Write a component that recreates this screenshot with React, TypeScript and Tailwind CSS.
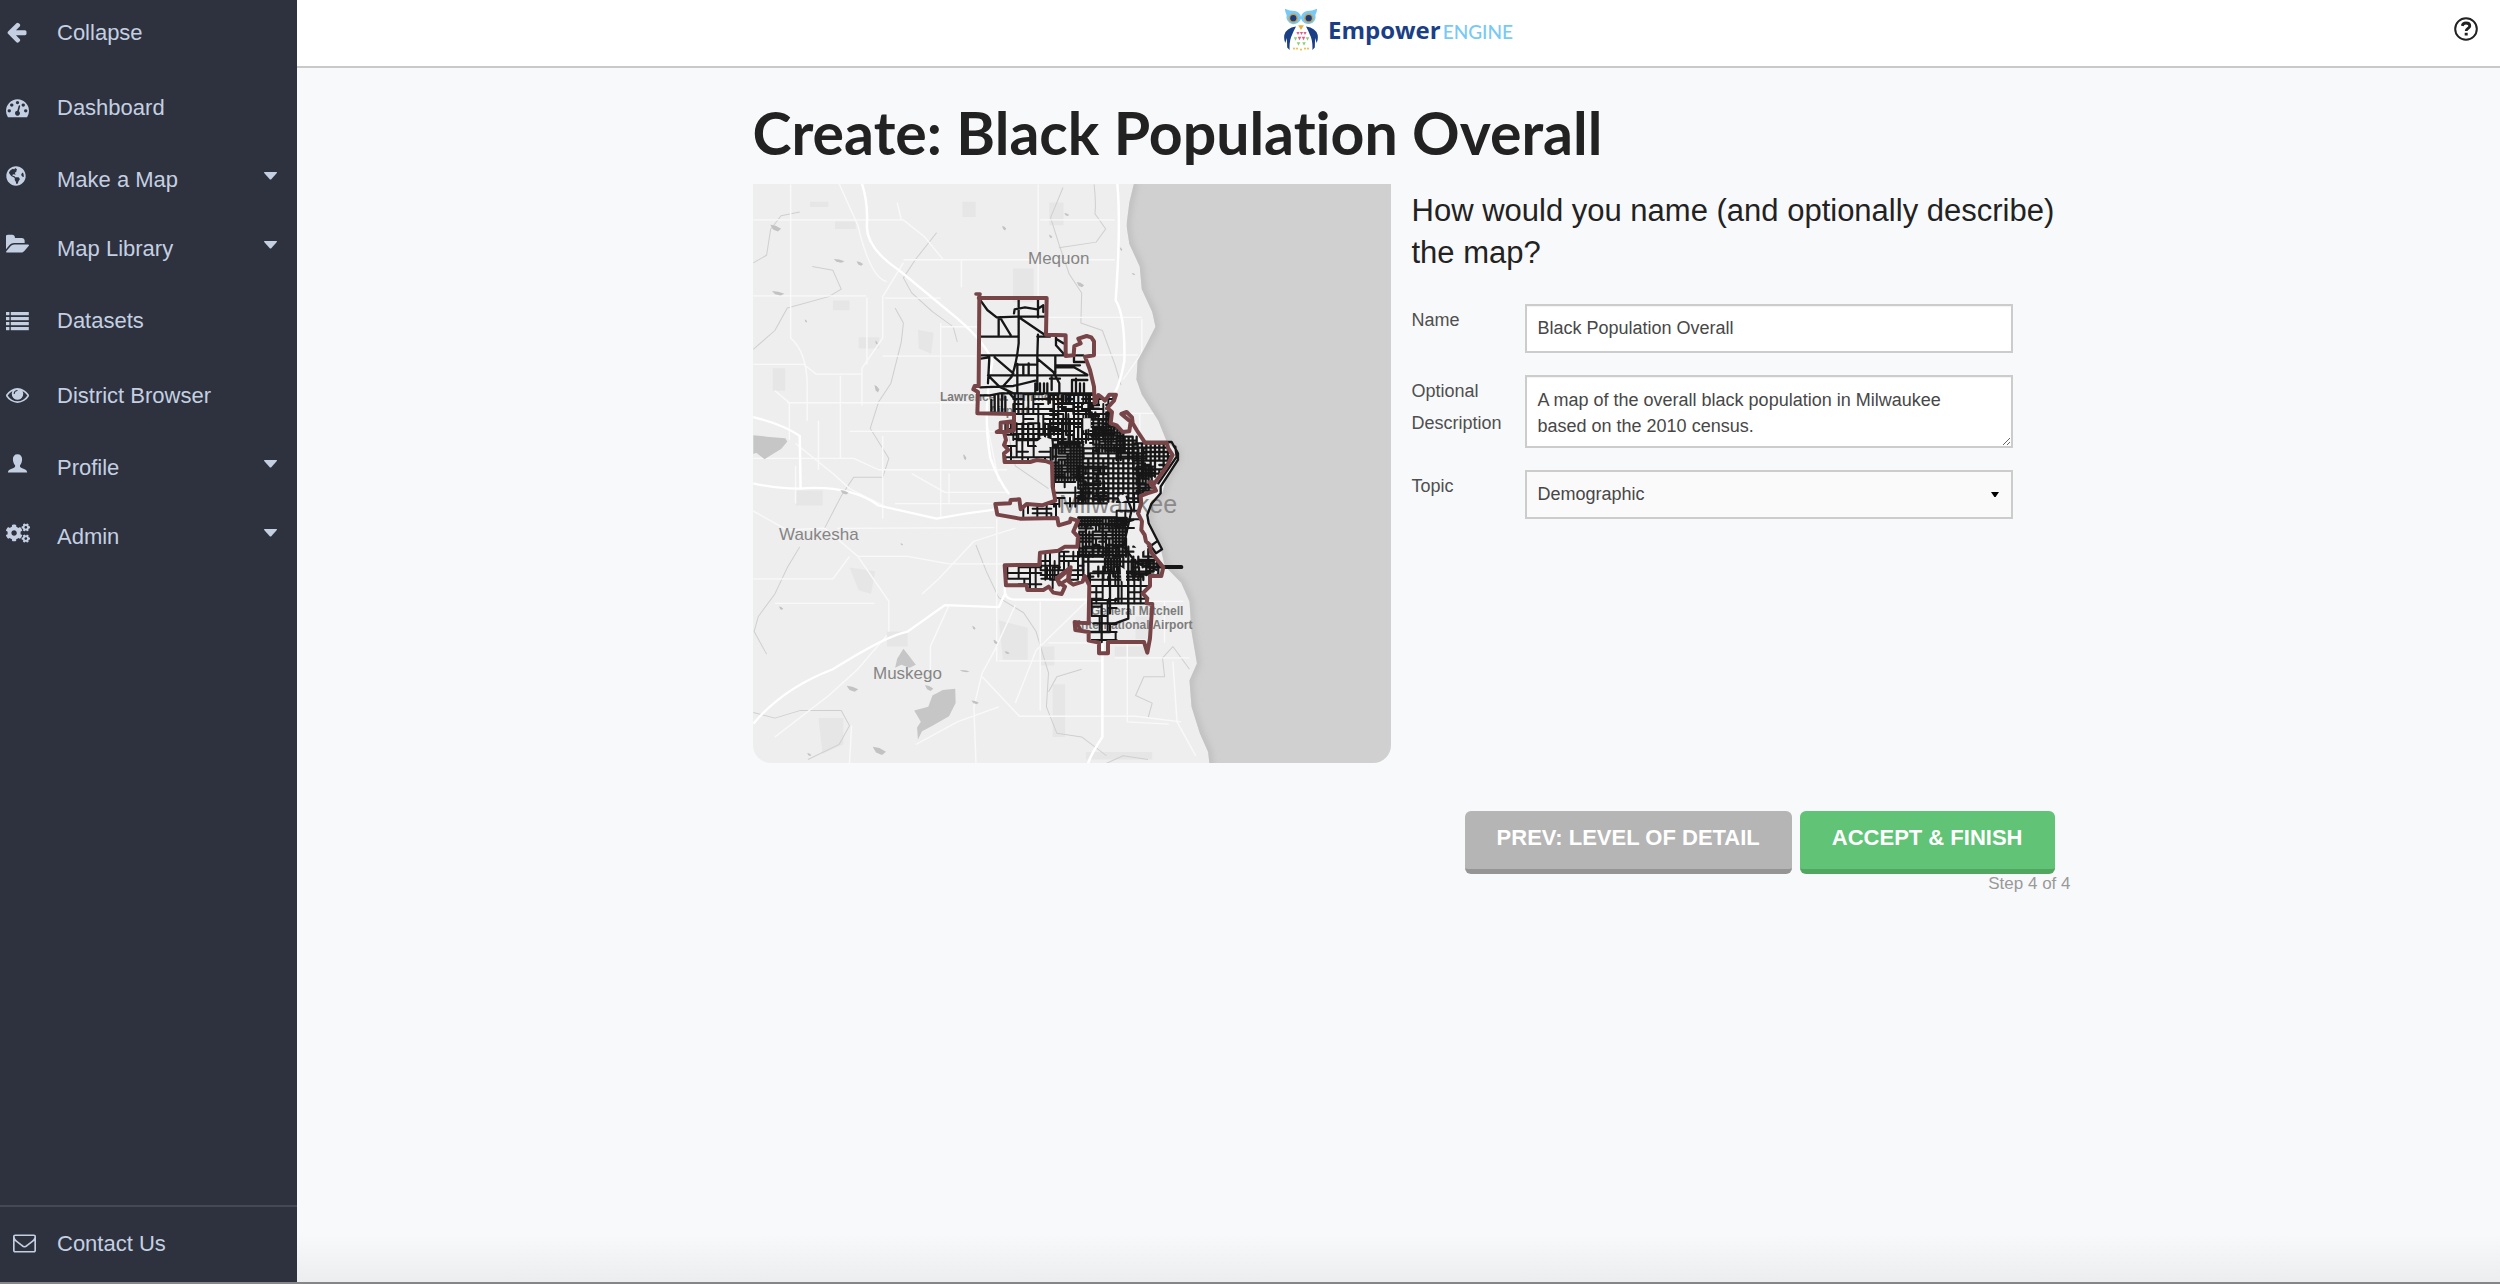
import React from "react";
import { FaCogs, FaGlobeAmericas } from "react-icons/fa";

const ICON = "h-[23px] w-[23px] fill-current";

function ArrowLeftIcon() {
  return (
    <svg viewBox="-60 128 1792 1792" className={ICON} aria-hidden="true">
      <path d="M1536 896v128q0 53-32.5 90.5t-84.5 37.5h-704l293 294q38 36 38 90t-38 90l-75 76q-37 37-90 37-52 0-91-37l-651-652q-37-37-37-90 0-52 37-91l651-650q38-38 91-38 52 0 90 38l75 74q38 38 38 91t-38 91l-293 293h704q52 0 84.5 37.5t32.5 90.5z" />
    </svg>
  );
}

function GaugeIcon() {
  return (
    <svg viewBox="0 0 1792 1792" className={ICON} aria-hidden="true">
      <path d="M384 1152q0-53-37.5-90.5t-90.5-37.5-90.5 37.5-37.5 90.5 37.5 90.5 90.5 37.5 90.5-37.5 37.5-90.5zm192-448q0-53-37.5-90.5t-90.5-37.5-90.5 37.5-37.5 90.5 37.5 90.5 90.5 37.5 90.5-37.5 37.5-90.5zm428 481l101-382q6-26-7.5-48.5t-38.5-29.5-48 6.5-30 39.5l-101 382q-60 5-107 43.5t-63 98.5q-20 77 20 146t117 89 146-20 89-117q16-60-6-117t-72-91zm660-33q0-53-37.5-90.5t-90.5-37.5-90.5 37.5-37.5 90.5 37.5 90.5 90.5 37.5 90.5-37.5 37.5-90.5zm-640-640q0-53-37.5-90.5t-90.5-37.5-90.5 37.5-37.5 90.5 37.5 90.5 90.5 37.5 90.5-37.5 37.5-90.5zm448 192q0-53-37.5-90.5t-90.5-37.5-90.5 37.5-37.5 90.5 37.5 90.5 90.5 37.5 90.5-37.5 37.5-90.5zm320 448q0 261-141 483-19 29-54 29h-1402q-35 0-54-29-141-221-141-483 0-182 71-348t191-286 286-191 348-71 348 71 286 191 191 286 71 348z" />
    </svg>
  );
}

function GlobeIcon() {
  return <FaGlobeAmericas className="h-5 w-5" aria-hidden="true" />;
}

function FolderIcon() {
  return (
    <svg viewBox="0 0 1815 1792" className={ICON} aria-hidden="true">
      <path d="M1815 952q0 31-31 66l-336 396q-43 51-120.5 86.5t-143.5 35.5h-1088q-34 0-60.5-13t-26.5-43q0-31 31-66l336-396q43-51 120.5-86.5t143.5-35.5h1088q34 0 60.5 13t26.5 43zm-343-344v160h-832q-94 0-197 47.5t-164 119.5l-337 396-5 6q0-4-.5-12.5t-.5-12.5v-960q0-92 66-158t158-66h320q92 0 158 66t66 158v32h544q92 0 158 66t66 158z" />
    </svg>
  );
}

function ListIcon() {
  return (
    <svg viewBox="0 0 23 23" className={ICON} aria-hidden="true">
      {[3, 8, 13, 18].map((y) => (
        <React.Fragment key={y}>
          <rect x="0" y={y} width="3.4" height="3.2" />
          <rect x="4.8" y={y} width="18" height="3.2" />
        </React.Fragment>
      ))}
    </svg>
  );
}

function EyeIcon() {
  return (
    <svg viewBox="0 64 1792 1792" className={ICON} aria-hidden="true">
      <path d="M1664 960q-152-236-381-353 61 104 61 225 0 185-131.5 316.5t-316.5 131.5-316.5-131.5-131.5-316.5q0-121 61-225-229 117-381 353 133 205 333.5 326.5t434.5 121.5 434.5-121.5 333.5-326.5zm-720-384q0-20-14-34t-34-14q-125 0-214.5 89.5t-89.5 214.5q0 20 14 34t34 14 34-14 14-34q0-86 61-147t147-61q20 0 34-14t14-34zm848 384q0 34-20 69-140 230-376.5 368.5t-499.5 138.5-499.5-139-376.5-368q-20-35-20-69t20-69q140-229 376.5-368t499.5-139 499.5 139 376.5 368q20 35 20 69z" />
      <circle cx="896" cy="850" r="420" />
      <path d="M640 800q10-190 220-230" fill="none" stroke="#2d323e" strokeWidth="90" strokeLinecap="round" />
    </svg>
  );
}

function UserIcon() {
  return (
    <svg viewBox="0 0 23 23" className={ICON} aria-hidden="true">
      <path d="M11.5 2.2c3 0 4.6 2 4.6 5 0 2.600-.9 4.800-2.100 6v1.300c.4 1.100 1.500 1.500 3.500 2.200 2.600.9 3.500 1.600 3.700 3.800H1.900c.2-2.200 1.100-2.900 3.700-3.800 2-.7 3.100-1.100 3.500-2.200v-1.300c-1.200-1.200-2.200-3.400-2.200-6 0-3 1.600-5 4.600-5z" />
    </svg>
  );
}

function CogsIcon() {
  return <FaCogs className="h-6 w-6" aria-hidden="true" />;
}

function EnvelopeIcon() {
  return (
    <svg viewBox="0 64 1792 1792" className={ICON} aria-hidden="true">
      <path d="M1664 1504v-768q-32 36-69 66-268 206-426 338-51 43-83 67t-86.500 48.500-102.500 24.500h-2q-48 0-102.500-24.500t-86.500-48.500-83-67q-158-132-426-338-37-30-69-66v768q0 13 9.500 22.500t22.500 9.500h1472q13 0 22.500-9.500t9.500-22.500zm0-1051v-24.500l-.5-13-3-12.500-5.500-9-9-7.500-14-2.500h-1472q-13 0-22.500 9.500t-9.500 22.500q0 168 147 284 193 152 401 317 6 5 35 29.500t46 37.500 44.500 31.500 50.500 27.500 43 9h2q20 0 43-9t50.500-27.500 44.500-31.500 46-37.500 35-29.500q208-165 401-317 54-43 100.500-115.500t46.500-131.500zm128-37v1088q0 66-47 113t-113 47h-1472q-66 0-113-47t-47-113v-1088q0-66 47-113t113-47h1472q66 0 113 47t47 113z" />
    </svg>
  );
}

type NavItem = { label: string; icon: () => React.ReactElement; menu?: boolean };

const NAV: NavItem[] = [
  { label: "Dashboard", icon: GaugeIcon },
  { label: "Make a Map", icon: GlobeIcon, menu: true },
  { label: "Map Library", icon: FolderIcon, menu: true },
  { label: "Datasets", icon: ListIcon },
  { label: "District Browser", icon: EyeIcon },
  { label: "Profile", icon: UserIcon, menu: true },
  { label: "Admin", icon: CogsIcon, menu: true },
];

function Sidebar() {
  return (
    <aside className="flex w-[297px] shrink-0 flex-col justify-between bg-[#2d323e] text-[22px] leading-6 text-[#c5cfe2]">
      <nav>
        <button type="button" className="flex h-[70px] w-full items-center pb-1 pl-1.5 text-left">
          <span className="flex w-[51px] shrink-0">
            <ArrowLeftIcon />
          </span>
          Collapse
        </button>
        <ul>
          {NAV.map(({ label, icon: Icon, menu }) =>
            menu ? (
              <li key={label}>
                <button type="button" className="flex h-[69px] w-full items-center pl-1.5 text-left">
                  <span className="flex w-[51px] shrink-0 pb-2">
                    <Icon />
                  </span>
                  <span className="grow">{label}</span>
                  <svg viewBox="0 0 13 8" className="mr-5 mb-2 h-2 w-[13px] fill-current" aria-hidden="true">
                    <path d="M0.500 0h12q.8.2.3.900L7.300 7.200q-.8.700-1.600 0L.2.900Q-.2.200.5 0z" />
                  </svg>
                </button>
              </li>
            ) : (
              <li key={label}>
                <a href="#" className="flex h-[75px] items-center pl-1.5">
                  <span className="flex w-[51px] shrink-0">
                    <Icon />
                  </span>
                  {label}
                </a>
              </li>
            ),
          )}
        </ul>
      </nav>
      <a href="#" className="flex h-[77px] items-center border-t-2 border-[#434956] pb-0.5 pl-[13px]">
        <span className="flex w-11 shrink-0">
          <EnvelopeIcon />
        </span>
        Contact Us
      </a>
    </aside>
  );
}

function Owl() {
  const tri = (x: number, y: number, r: number) => `M${x - r} ${y - r}h${2 * r}l${-r} ${2 * r}z`;
  return (
    <svg viewBox="0 0 34 44" className="h-11 w-[34px]" aria-hidden="true">
      <path d="M.800.800Q6 3 11 3q5 1 6 6 1-5 6-6 5 0 10.200-2.200-.4 4-1.800 6A6.800 6.800 0 1 1 17 10.500 6.800 6.800 0 1 1 2.600 7Q1.200 4.500.800.800z" fill="#78c9f5" />
      <circle cx="9.300" cy="10.200" r="4.600" fill="#c9a24a" />
      <circle cx="24.700" cy="10.200" r="4.600" fill="#c9a24a" />
      <circle cx="9.300" cy="10.200" r="3.100" fill="#1a3b80" />
      <circle cx="24.700" cy="10.200" r="3.100" fill="#1a3b80" />
      <path d="M14.200 17.200h5.600L17 22z" fill="#f0ac2e" />
      <path d="M12 18.500Q2 20 .300 27q-.6 5 1 8l1.600-5 .3 9.500 2.400 2.500q-.4-10 2.400-15Q9.500 23 12 18.500zM22 18.500Q32 20 33.700 27q.6 5-1 8L31.100 30l-.3 9.500L28.400 42q.4-10-2.400-15-1.500-4-4-8.500z" fill="#1b3f86" />
      <path d={[14, 17.5, 21].map((x) => tri(x, 25.500, 1.600)).join("") + tri(15.500, 30.500, 1.800) + tri(19.500, 30.500, 1.800)} fill="#dd5f8c" />
      <path d={tri(11.500, 31, 1.800) + tri(23.500, 31, 1.800) + tri(14.500, 36, 1.800) + tri(20, 36, 1.800)} fill="#8fcf76" />
      <path d={[10, 13, 17, 21, 24].map((x) => tri(x, x === 17 ? 42 : 41, 1.200)).join("")} fill="#f0b040" />
    </svg>
  );
}

function Header() {
  return (
    <header className="flex h-[68px] items-start border-b-2 border-[#c9c9ca] bg-white">
      <div className="w-[46px]" />
      <a href="#" className="mx-auto mt-2 flex items-start gap-2.5">
        <Owl />
        <span className="flex items-baseline gap-0.5">
          <span className="font-['Open_Sans'] text-[24px] leading-[44px] font-bold text-[#1b3f86]">Empower</span>
          <span className="font-['Lato'] text-[19px] leading-6 font-medium text-[#78c9f5]">ENGINE</span>
        </span>
      </a>
      <button type="button" aria-label="Help" className="mt-[17px] mr-[22px]">
        <svg viewBox="0 0 24 24" className="h-6 w-6" fill="none" stroke="#222" aria-hidden="true">
          <circle cx="12" cy="12" r="10.800" strokeWidth="2" />
          <path d="M8.200 8.800C8.700 6.800 10.200 6 12 6c2.200 0 3.800 1.100 3.800 2.900 0 2.400-3.600 2.500-3.600 5" strokeWidth="2.800" />
          <path d="M10.700 15.800h3v2.700h-3z" fill="#222" stroke="none" />
        </svg>
      </button>
    </header>
  );
}

const BOUNDARY =
  "M88 54 290 54 288 164 347 166 347 228 371 226 373 198 392 190 385 176 410 168 424 172 432 184 432 226 405 230 420 270 432 320 434 370 445 345 455 352 465 362 478 344 498 344 492 362 472 384 486 396 482 430 500 436 518 456 538 454 542 425 514 402 530 396 546 412 548 430 560 450 585 488 650 488 655 505 668 525 650 560 612 612 605 606 618 632 592 640 572 648 574 670 564 700 576 724 574 750 584 765 588 784 600 795 602 815 640 862 634 888 600 888 600 918 578 940 592 955 590 970 607 972 600 1075 592 1118 582 1086 474 1086 474 1120 447 1120 447 1088 416 1082 416 1056 376 1050 374 1026 390 1028 416 1030 418 916 404 888 398 905 370 914 356 904 362 862 320 895 330 910 345 920 335 942 310 938 296 920 280 930 232 930 230 916 168 916 164 856 268 854 270 818 325 812 345 800 382 800 384 770 370 755 384 722 362 716 360 726 326 736 322 714 210 716 142 704 136 672 180 670 182 660 208 658 212 688 230 672 276 676 316 662 308 620 306 550 290 544 260 540 240 546 164 546 162 520 175 510 162 495 168 480 162 456 140 456 152 450 152 428 190 424 190 452 166 456 192 450 192 402 82 400 84 336 70 328 74 318 86 318z";

const NORTH_STREETS =
  "M92 62 112 90 140 112 200 110 284 110M146 112 146 165M150 112 182 165M206 60V108L206 190Q200 250 185 290L160 318M92 170H202M264 58V112M192 100 194 88 225 82 262 88 280 76V96M210 114 284 164M264 164 262 228V330M262 170H300M318 170V196L345 226M318 176 340 190M92 226H400M118 232 114 310M118 232 92 236M134 232 190 280M262 236 310 276 328 310V340M316 230V280M372 228V246H404M318 256H390M316 262H372L412 284M114 286H412M118 290 148 320 190 340M90 322 190 318 256 302M202 252V340M220 254V282M236 250V282M202 254H256M300 296H330M305 292V330M256 310V340M270 310V340M282 310V340M292 310V340M366 300V340M378 296V340M366 300H412M390 310V340M402 310V340M90 346 120 346 150 340H432M124 360V398M134 346V398M145 342V398M156 342V398M170 330 196 360M166 400 166 350M194 340V400";

// Street blocks: [left, top, right, bottom, spacing, line width, share of lines kept]
const BLOCKS: number[][] = [
  [190, 342, 495, 480, 15, 6, 0.72],
  [166, 430, 320, 545, 17, 6, 0.64],
  [300, 345, 430, 500, 12, 6, 0.6],
  [425, 375, 490, 470, 11, 7, 0.72],
  [430, 440, 520, 515, 9, 7, 0.85],
  [500, 470, 560, 540, 12, 7, 0.78],
  [308, 485, 400, 600, 9, 7, 0.85],
  [400, 505, 585, 665, 15, 7, 0.94],
  [385, 560, 470, 670, 11, 7, 0.62],
  [550, 490, 665, 590, 13, 7, 0.86],
  [560, 560, 610, 640, 9, 7, 0.8],
  [312, 590, 400, 680, 16, 6, 0.7],
  [220, 672, 325, 712, 14, 6, 0.66],
  [386, 714, 530, 740, 9, 7, 0.93],
  [388, 735, 530, 830, 10, 7, 0.82],
  [400, 800, 640, 900, 15, 7, 0.64],
  [465, 835, 510, 870, 9, 7, 0.9],
  [500, 640, 572, 760, 26, 6, 0.7],
  [420, 880, 600, 970, 19, 6, 0.7],
  [425, 960, 500, 1082, 24, 6, 0.55],
  [272, 815, 400, 900, 14, 6, 0.66],
  [172, 862, 330, 925, 17, 6, 0.66],
  [545, 840, 635, 885, 11, 7, 0.7],
];

function streetPath(block: number[], seed: number) {
  const [x0, y0, x1, y1, step, , keep] = block;
  let s = seed * 7919 + 17;
  const rnd = () => {
    s = (s * 16807) % 2147483647;
    return s / 2147483647;
  };
  rnd();
  let d = "";
  for (let x = x0; x <= x1; x += step) {
    for (let y = y0; y < y1; y += step * 2) {
      if (rnd() < keep) d += `M${x} ${y}V${Math.min(y + step * 2, y1)}`;
    }
  }
  for (let y = y0; y <= y1; y += step) {
    for (let x = x0; x < x1; x += step * 2) {
      if (rnd() < keep) d += `M${x} ${y}H${Math.min(x + step * 2, x1)}`;
    }
  }
  return d;
}

const PATCHES =
  "M145 58h44v14h-44zM205 110h50v20h-50zM512 58h32v40h-32zM722 60h34v60h-34zM634 235h50v90h-50zM405 398l38 8-6 56-30-14zM200 320h40v26h-40zM262 418h50v30h-50zM110 825h65v40h-65zM240 1030l62 10-10 60-30-10zM600 1170l70 20v85h-60zM330 1200h50v40h-50zM730 1340h30v140h-30zM165 1430h60v70l-50 25zM930 1160h35v60h-35zM880 1240h80v26h-80zM700 1240h34v50h-34zM55 500h30v60h-30zM790 700h60v60h-60zM810 1520h160v20h-160z";

const HIGHWAYS =
  "M270 10Q285 60 282 120T360 240L480 350Q560 420 585 480M8 630Q80 650 120 680L122 820M8 806Q60 820 120 820 240 810 310 865L450 900Q520 885 590 876M585 480Q560 620 580 740 600 800 625 835M615 1080Q610 1115 640 1115L820 1115M8 1445Q80 1350 200 1300 330 1210 380 1200L470 1130 600 1135 615 1100M886 10Q895 120 882 320 905 360 903 480 890 560 870 580M850 1230V1480Q820 1530 815 1553";

const ROADS =
  "M98 12V420Q140 460 138 560V640M8 106H370L420 150 465 210M215 10 260 120Q290 260 330 270M355 60 365 106M370 220 320 310V420L270 500V600M370 212H880M510 212V285M695 12V310M700 106H880M8 308H280M282 312V490M8 490H130L160 516H270M325 314H460M460 380V900M460 390H550M320 468H545M218 520V740M90 592H550M60 560 95 592V690M240 668H610M110 700 200 780 240 820 330 870M8 740H250L310 770H620M350 860H590M320 680V900M210 926 590 924M260 1000H380L480 1020H610M180 925 260 1000 335 1120V1200M8 1060H200L240 1000M60 1125H300M330 1210 260 1300 190 1370 60 1480M480 1130 435 1240V1310M415 1100 455 1060 540 960 640 925M595 900V1280M600 1278H850M640 1130 590 1250 560 1310M700 1120V1410M640 1390 690 1250 820 1110M560 1320 650 1425H930L1040 1440M720 1230H820M945 370V460L900 530M700 365H945M830 465H935M900 620H990M940 620V700M950 1075V1120H1045M1000 1120V1230M880 1270H1060M910 1230V1440L1010 1446M1020 1280 1030 1440 1075 1530M545 1550 540 1400 560 1310M400 1500 500 1440 600 1400M8 880 90 930 180 925M245 1450 240 1550M570 640 600 800M480 780V860M390 780 470 830 620 830M110 760V860M165 640V770";

const RIVERS =
  "M830 12Q835 60 832 90L858 130 835 165 745 180M755 20 740 60 725 100 745 170 770 250 800 300 798 380 850 400 880 490 895 545M8 450 60 400 90 340 190 310 220 290 200 240 150 230M450 140 400 210 370 260 390 300 440 350 490 390 500 430M350 340 370 380 365 430 340 540 310 590 290 660 335 740 320 790 250 790 220 840 180 925M120 975 90 1030 60 1100 20 1160 10 1200 40 1260M8 1415 60 1430 120 1410 220 1410 240 1450 215 1500 140 1540M545 970 570 1040 600 1110 660 1150 690 1200 720 1310 715 1400 740 1470 800 1480 860 1530M620 660 640 760 720 820M1060 1300 1020 1240 995 1270 1000 1320 950 1320 930 1370 970 1390 960 1430M8 220 40 200 50 130 75 95 120 85M960 1540 900 1530 860 1550M800 1300 740 1320 720 1360";

const PONDS: number[][] = [
  [62, 128, 13, 9], [68, 301, 15, 6], [215, 215, 13, 5], [265, 222, 8, 6], [613, 128, 5, 6], [797, 278, 9, 7], [306, 555, 6, 10],
  [518, 737, 4, 8], [228, 830, 10, 6], [247, 1352, 14, 8], [543, 1388, 9, 5], [312, 1517, 16, 11], [143, 1527, 5, 4], [432, 1350, 10, 8],
  [518, 1305, 12, 3], [620, 1256, 6, 4], [75, 1138, 5, 5], [540, 1190, 4, 5], [592, 1228, 5, 6], [764, 92, 6, 4], [725, 150, 4, 5],
  [135, 375, 3, 4], [305, 432, 3, 5], [366, 968, 3, 3], [925, 250, 4, 3], [895, 184, 3, 5],
];

const LABEL = "fill-[#858585] font-['Liberation_Sans']";

function MapPreview() {
  return (
    <svg viewBox="0 0 638 579" role="img" aria-label="Map of Milwaukee" className="h-auto w-full rounded-b-[18px]">
      <defs>
        <clipPath id="city">
          <path d={BOUNDARY} />
        </clipPath>
        <clipPath id="lake">
          <path d="M927 5 915 60 908 120 915 170 940 230 945 290 970 350 978 390 955 440 935 480 932 530 945 570 985 640 1005 695 1030 720 1030 740 1005 790 995 830 965 860 962 910 990 975 1000 1025 1040 1070 1060 1120 1065 1200 1078 1285 1060 1330 1065 1400 1085 1470 1105 1520 1110 1570 1570 1570 1570 5z" />
        </clipPath>
        <filter id="shore" x="-20%" y="-5%" width="140%" height="110%">
          <feGaussianBlur stdDeviation="9" />
        </filter>
      </defs>
      <rect width="638" height="579" fill="#eeeeee" />
      <g transform="matrix(.4146 0 0 .3763 -3 -4)" fill="none" strokeLinejoin="round">
        <path d={PATCHES} fill="#e6e6e6" />
        <path d={RIVERS} stroke="#cfcfcf" strokeWidth="2.500" />
        <path d={ROADS} stroke="#f9f9f9" strokeWidth="3.500" />
        <path d={HIGHWAYS} stroke="#ffffff" strokeWidth="6" />
        {PONDS.map(([x, y, rx, ry]) => (
          <path key={`${x}-${y}`} d={`M${x - rx} ${y - ry}l${rx} ${ry * 0.3} ${rx} ${ry * 0.9}-${rx * 0.6} ${ry * 0.8}-${rx * 0.9}-${ry * 0.6}z`} fill="#c2c2c2" />
        ))}
        <path d="M8 678 40 682 85 686 90 695 75 715 55 728 35 742 15 725 8 728zM370 1246 382 1262 400 1288 385 1296 365 1288 350 1296 355 1272zM495 1352 496 1390 480 1425 440 1450 415 1465 405 1487 403 1455 412 1440 396 1410 430 1400 440 1370 465 1355z" fill="#c6c6c6" />
        <g clipPath="url(#lake)">
          <rect x="800" y="0" width="800" height="1570" fill="#d0d0d0" />
          <path
            d="M927 5 915 60 908 120 915 170 940 230 945 290 970 350 978 390 955 440 935 480 932 530 945 570 985 640 1005 695 1030 720 1030 740 1005 790 995 830 965 860 962 910 990 975 1000 1025 1040 1070 1060 1120 1065 1200 1078 1285 1060 1330 1065 1400 1085 1470 1105 1520 1110 1570"
            stroke="#bababa"
            strokeWidth="14"
            filter="url(#shore)"
          />
        </g>
      </g>
      <g className={LABEL}>
        <g fontSize="17">
          <text x="275" y="80">Mequon</text>
          <text x="26" y="356">Waukesha</text>
          <text x="120" y="495">Muskego</text>
        </g>
        <text x="306" y="329" fontSize="25" className="fill-[#8a8a8a]">Milwaukee</text>
        <g fontSize="12" fontWeight="bold" className="fill-[#7c7c7c]">
          <text x="187" y="217">Lawrence J. Timmerman</text>
          <text x="236" y="231">Airport</text>
          <text x="384" y="431" textAnchor="middle">General Mitchell</text>
          <text x="382" y="445" textAnchor="middle">International Airport</text>
        </g>
      </g>
      <g transform="translate(197 96) scale(.3333)" fill="none" strokeLinejoin="round" strokeLinecap="round">
        <g clipPath="url(#city)" stroke="#161616">
          <path d={NORTH_STREETS} strokeWidth="7" />
          {BLOCKS.map((block, i) => (
            <path key={i} d={streetPath(block, i + 1)} strokeWidth={block[5]} />
          ))}
          <path d="M255 490 280 470 304 478 306 500 265 508zM505 650l20-8 6 18-18 8zM548 760l30 10 16 34-22 14-20-22zM400 415l22 0 0 30-22 6zM512 860l16 10 0 40-14-8z" fill="#eeeeee" stroke="none" />
          <path d="M420 1056H480M425 980H455V1030M455 975V1086M535 900V1016L495 1030H450M430 1030H480V1056M420 970H600M505 870V968M480 870V1000M385 712H500L515 730 550 720M530 650 545 690 520 800 560 850 620 870" strokeWidth="7" />
        </g>
        <path d="M585 486H665L684 520V540L632 620V640L604 672 592 705 596 730 636 808 618 820 600 795M676 500 680 530 625 610M606 795 620 785M636 862H696" stroke="#161616" strokeWidth="7" />
        <path d="M645 861H694" stroke="#161616" strokeWidth="12" />
        <path d={BOUNDARY} stroke="#774547" strokeWidth="12" />
        <path d="M78 42H90L86 54M322 900l34-30-2 28-26 16zM598 606l10 14M380 1030l10 16M172 432v18" stroke="#774547" strokeWidth="11" />
      </g>
    </svg>
  );
}

const LABEL_TEXT = "text-[18px] leading-[32px] text-[#4f4f4f]";
const FIELD = "block w-full border-2 border-[#cccccc] px-[11px] text-[18px] text-[#474747]";

function DetailsForm() {
  return (
    <form className="pt-1.5">
      <h2 className="text-[31px] leading-[42px] text-[#222]">How would you name (and optionally describe) the map?</h2>
      <div className="mt-[30px] grid max-w-[601px] grid-cols-[113px_minmax(0,1fr)] gap-y-[22px]">
        <label htmlFor="name" className={LABEL_TEXT}>Name</label>
        <input id="name" type="text" defaultValue="Black Population Overall" className={`${FIELD} h-[49px] bg-white inset-shadow-xs`} />
        <label htmlFor="description" className={LABEL_TEXT}>Optional Description</label>
        <textarea
          id="description"
          defaultValue="A map of the overall black population in Milwaukee based on the 2010 census."
          className="block h-[73px] w-full resize overflow-hidden border-2 border-[#cccccc] bg-white pt-2.5 pr-8 pl-[11px] text-[18px] leading-[26px] text-[#474747] inset-shadow-xs"
        />
        <label htmlFor="topic" className={LABEL_TEXT}>Topic</label>
        <div className="relative">
          <select id="topic" className={`${FIELD} h-[49px] appearance-none rounded-none bg-[#fafafa]`}>
            <option>Demographic</option>
          </select>
          <svg viewBox="0 0 8 5" className="pointer-events-none absolute top-[22px] right-3.5 h-[5px] w-2" aria-hidden="true">
            <path d="M0 0h8L4.600 5H3.400z" />
          </svg>
        </div>
      </div>
    </form>
  );
}

const BUTTON = "h-[63px] rounded-md border-b-[5px] px-8 pb-1.5 text-[22px] font-bold text-white uppercase";

export default function App() {
  return (
    <div className="flex min-h-screen border-b-2 border-[#868686] bg-[#f8f9fb] font-['Liberation_Sans',Arial,sans-serif]">
      <Sidebar />
      <div className="flex min-w-0 grow flex-col">
        <Header />
        <main className="mx-auto w-full max-w-[1344px] grow pl-[26px]">
          <h1 className="pt-[23px] font-['Lato'] text-[59px] leading-[84px] font-bold text-[#222] [font-variant-ligatures:none]">
            Create: Black Population Overall
          </h1>
          <div className="mt-[9px] grid grid-cols-[minmax(0,638fr)_minmax(0,659fr)] items-start gap-[21px]">
            <MapPreview />
            <DetailsForm />
          </div>
          <div className="mt-12 flex justify-end gap-2 pr-4">
            <button type="button" className={`${BUTTON} border-[#959595] bg-[#b5b5b5]`}>Prev: Level of Detail</button>
            <button type="button" className={`${BUTTON} border-[#51a75f] bg-[#60c376]`}>Accept &amp; Finish</button>
          </div>
          <p className="text-right text-[17px] leading-5 text-[#999]">Step 4 of 4</p>
        </main>
        <div className="h-12 bg-linear-to-b from-[#f8f9fb] to-[#ecedef]" />
      </div>
    </div>
  );
}
